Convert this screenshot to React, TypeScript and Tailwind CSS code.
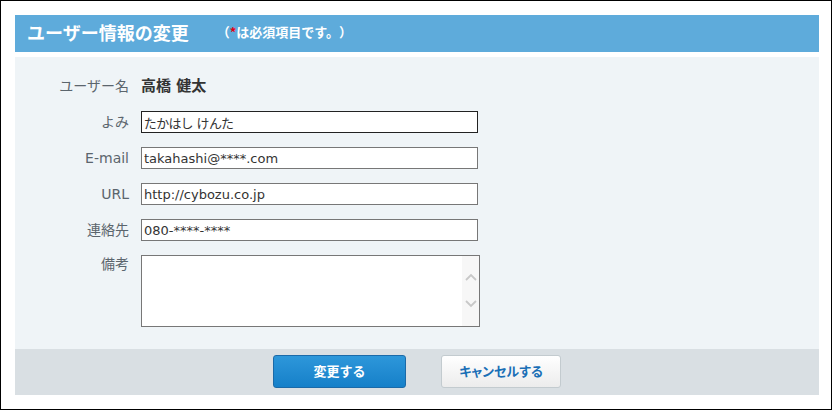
import { useState } from 'react'

const FONT = { fontFamily: '"DejaVu Sans", "Noto Sans CJK JP", sans-serif' }
const CJK = { fontFamily: '"Noto Sans CJK JP", sans-serif' }

interface Field {
  label: string
  value: string
  focused?: boolean
}

const FIELDS: Field[] = [
  { label: 'よみ', value: 'たかはし けんた', focused: true },
  { label: 'E-mail', value: 'takahashi@****.com' },
  { label: 'URL', value: 'http://cybozu.co.jp' },
  { label: '連絡先', value: '080-****-****' },
]

function Chevron({ up }: { up?: boolean }) {
  return (
    <svg width="12" height="8" viewBox="0 0 12 8" className="block">
      <path
        d={up ? 'M1 7 L6 2 L11 7' : 'M1 1 L6 6 L11 1'}
        fill="none"
        stroke="#c8c8c8"
        strokeWidth="1.8"
      />
    </svg>
  )
}

export default function App() {
  const [values, setValues] = useState(FIELDS.map((f) => f.value))
  const [note, setNote] = useState('')

  return (
    <div className="w-[832px] h-[410px] border border-black bg-white text-[#333]" style={FONT}>
      <div className="ml-[14px] mt-[14px] w-[804px]">
        <div className="h-[37px] bg-[#5eabdb] flex items-center pl-[12px] text-white">
          <h1 className="text-[18px] font-bold leading-none">ユーザー情報の変更</h1>
          <span
            className="ml-[28px] -mt-[5px] text-[13px] font-bold leading-none [text-spacing-trim:space-all]"
            style={CJK}
          >
            （<span className="text-[#e60012]">*</span>は必須項目です。）
          </span>
        </div>

        <div className="mt-[5px] bg-[#eff4f7] pt-[18px] pb-[22px]">
          <div className="flex items-center h-[22px]">
            <div className="w-[114px] text-right text-[14px] text-[#5b656d]">ユーザー名</div>
            <div className="ml-[12px] text-[15px] font-bold text-[#333]">高橋 健太</div>
          </div>

          {FIELDS.map((f, i) => (
            <div key={f.label} className="flex items-center h-[22px] mt-[14px]">
              <label className="w-[114px] text-right text-[14px] text-[#5b656d] leading-[22px]">{f.label}</label>
              <input
                value={values[i]}
                onChange={(e) => setValues(values.map((v, j) => (j === i ? e.target.value : v)))}
                className={`ml-[12px] w-[337px] h-[22px] bg-white px-[2px] text-[13px] text-[#333] outline-none border ${
                  f.focused ? 'border-[#222] [font-feature-settings:\'palt\']' : 'border-[#777]'
                }`}
                style={FONT}
              />
            </div>
          ))}

          <div className="flex items-start mt-[14px]">
            <label className="w-[114px] text-right text-[14px] text-[#5b656d] leading-[18px]">備考</label>
            <div className="ml-[12px] w-[339px] h-[72px] border border-[#777] bg-white flex">
              <textarea
                value={note}
                onChange={(e) => setNote(e.target.value)}
                className="flex-1 resize-none outline-none px-[2px] text-[13px]"
                style={FONT}
              />
              <div className="w-[17px] bg-[#f7f7f7] flex flex-col items-center pt-[17px] gap-[19px]">
                <Chevron up />
                <Chevron />
              </div>
            </div>
          </div>
        </div>

        <div className="h-[46px] bg-[#d9dfe3] flex justify-center items-start pt-[6px] gap-[35px]">
          <button className="w-[133px] h-[33px] rounded-[3px] border border-[#1b6aa8] bg-gradient-to-b from-[#2d97da] to-[#1580c9] text-white text-[13px] font-bold">
            変更する
          </button>
          <button className="w-[120px] h-[33px] rounded-[3px] border border-[#c3cbcf] bg-gradient-to-b from-white to-[#ececec] text-[#1a6fb6] text-[13px] font-bold [font-feature-settings:'palt']">
            キャンセルする
          </button>
        </div>
      </div>
    </div>
  )
}
